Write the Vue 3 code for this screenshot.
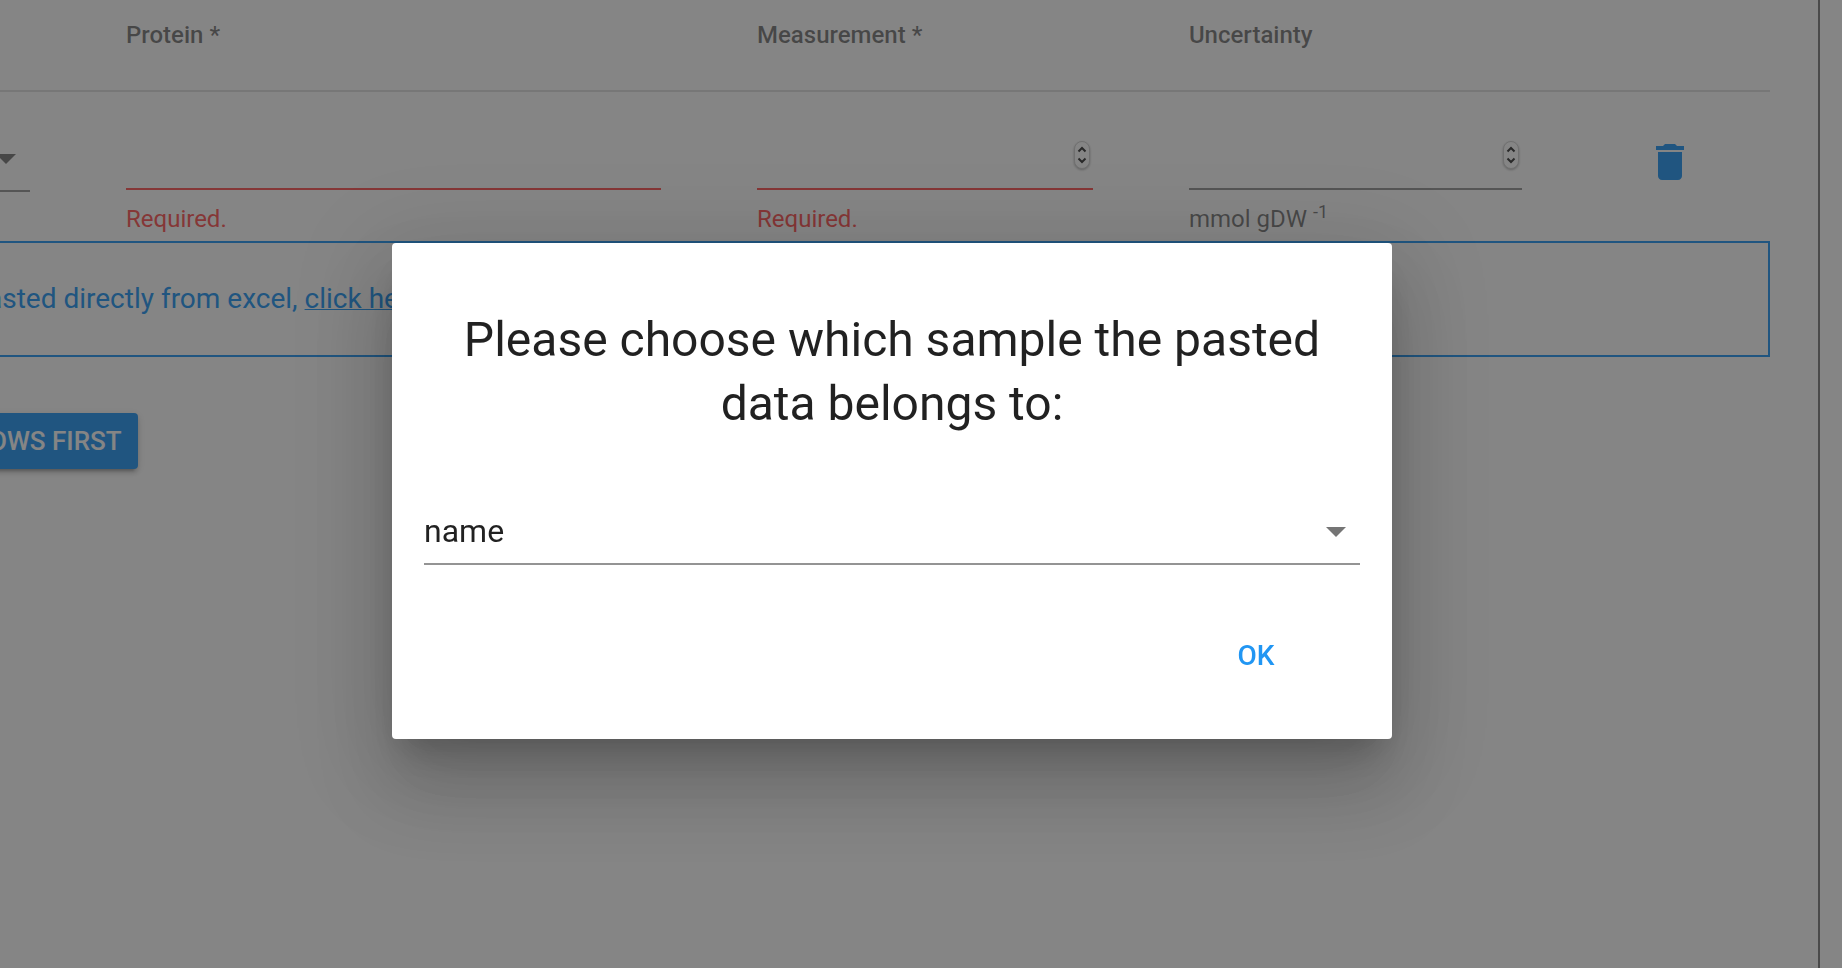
<script setup>
import { ref } from 'vue'

const columns = [
  { key: 'protein', title: 'Protein *', number: false, required: true },
  { key: 'measurement', title: 'Measurement *', number: true, required: true },
  { key: 'uncertainty', title: 'Uncertainty', number: true, required: false },
]
const row = ref({ protein: '', measurement: '', uncertainty: '' })
const sample = ref('name')
</script>

<template>
  <div class="page">
    <main class="panel">
      <table class="grid">
        <colgroup>
          <col class="c-select" />
          <col class="c-protein" />
          <col class="c-measurement" />
          <col class="c-uncertainty" />
          <col />
        </colgroup>
        <thead>
          <tr>
            <th></th>
            <th v-for="c in columns" :key="c.key" scope="col">{{ c.title }}</th>
            <th></th>
          </tr>
        </thead>
        <tbody>
          <tr>
            <td class="first">
              <div class="field select-field">
                <select class="control" aria-label="Sample"><option></option></select>
                <svg class="caret" viewBox="0 0 20 10" aria-hidden="true"><path d="M0 0h20L10 10z" /></svg>
              </div>
            </td>
            <td v-for="c in columns" :key="c.key">
              <div class="field" :class="{ error: c.required }">
                <input
                  v-model="row[c.key]"
                  class="control"
                  :type="c.number ? 'number' : 'text'"
                  :aria-label="c.title"
                />
                <svg v-if="c.number" class="stepper" viewBox="0 0 16 28" aria-hidden="true">
                  <rect x="0.5" y="0.5" width="15" height="27" rx="7.5" />
                  <path d="M4.5 10.5 8 7l3.500 3.500M4.500 17.500 8 21l3.500-3.500" />
                </svg>
              </div>
              <div v-if="c.required" class="hint error-text">Required.</div>
              <div v-else class="hint">mmol gDW <sup>-1</sup></div>
            </td>
            <td class="actions">
              <button class="delete" type="button" aria-label="Delete row">
                <svg viewBox="0 0 24 24" aria-hidden="true">
                  <path d="M6 19c0 1.100.9 2 2 2h8c1.100 0 2-.9 2-2V7H6v12zM19 4h-3.500l-1-1h-5l-1 1H5v2h14V4z" />
                </svg>
              </button>
            </td>
          </tr>
        </tbody>
      </table>
      <div class="notice">
        <p>asted directly from excel, <a href="#">click here</a></p>
      </div>
      <button class="add" type="button">OWS FIRST</button>
    </main>

    <div class="overlay">
      <form class="dialog" role="dialog" aria-modal="true" aria-labelledby="dialog-title" @submit.prevent>
        <h2 id="dialog-title">
          <label for="sample">Please choose which sample the pasted data belongs to:</label>
        </h2>
        <div class="pick">
          <select id="sample" v-model="sample">
            <option>name</option>
          </select>
          <svg class="caret" viewBox="0 0 20 10" aria-hidden="true"><path d="M0 0h20L10 10z" /></svg>
        </div>
        <button class="ok" type="submit">OK</button>
      </form>
    </div>
  </div>
</template>

<style>
body {
  margin: 0;
  background: #fff;
}
</style>

<style scoped>
.page,
.page * {
  box-sizing: border-box;
}
.page {
  min-height: 100vh;
  display: flex;
  padding-right: 22px;
  overflow: hidden;
  font-family: Roboto, "Liberation Sans", sans-serif;
}
button,
input,
select {
  font-family: inherit;
  border: 0;
  background: none;
  padding: 0;
  margin: 0;
  border-radius: 0;
  outline: 0;
}
.panel {
  flex: 1;
  min-width: 0;
  padding-right: 48px;
  border-right: 2px solid #7d7d7d;
}
.grid {
  width: 100%;
  table-layout: fixed;
  border-collapse: separate;
  border-spacing: 0;
}
.c-select {
  width: 78px;
}
.c-protein {
  width: 35.65%;
}
.c-measurement {
  width: 24.4%;
}
.c-uncertainty {
  width: 24.25%;
}
th {
  padding: 20px 48px 40px;
  border-bottom: 2px solid rgba(0, 0, 0, 0.12);
  font-size: 24px;
  line-height: 30px;
  font-weight: 500;
  text-align: left;
  white-space: nowrap;
  color: rgba(0, 0, 0, 0.54);
}
td {
  height: 149px;
  padding: 40px 48px 0;
  vertical-align: top;
}
td.first {
  padding-left: 0;
}
.field {
  position: relative;
  border-bottom: 2px solid rgba(0, 0, 0, 0.42);
}
.field.error {
  border-color: #ff5252;
}
.control {
  display: block;
  width: 100%;
  height: 56px;
  font-size: 32px;
  appearance: none;
  -moz-appearance: textfield;
}
.control::-webkit-inner-spin-button {
  display: none;
}
.select-field .control {
  height: 58px;
}
.caret {
  position: absolute;
  width: 20px;
  height: 10px;
  right: 14px;
  top: 28px;
  fill: rgba(0, 0, 0, 0.54);
  pointer-events: none;
}
.select-field .caret {
  top: 22px;
}
.stepper {
  position: absolute;
  right: 3px;
  top: 9px;
  width: 16px;
  height: 28px;
  filter: drop-shadow(0 1px 1px rgba(0, 0, 0, 0.3));
}
.stepper rect {
  fill: #fff;
  stroke: #d0d0d0;
}
.stepper path {
  fill: none;
  stroke: #333;
  stroke-width: 2;
}
.hint {
  margin-top: 16px;
  font-size: 24px;
  line-height: 26px;
  white-space: nowrap;
  color: rgba(0, 0, 0, 0.54);
}
.hint sup {
  font-size: 18px;
  line-height: 0;
}
.hint.error-text {
  color: #ff5252;
}
td.actions {
  padding: 46px 0 0;
  text-align: center;
}
.delete svg {
  display: block;
  width: 48px;
  height: 48px;
  fill: #2196f3;
}
.notice {
  border: 2px solid #2196f3;
  border-left: 0;
  height: 116px;
  display: flex;
  align-items: center;
}
.notice p {
  margin: 0 0 0 -13px;
  font-size: 28px;
  line-height: 42px;
  white-space: nowrap;
  color: #2196f3;
}
.notice a {
  color: inherit;
  text-decoration-thickness: 1px;
}
.add {
  display: block;
  height: 56px;
  margin: 56px 0 0 -11px;
  padding: 0 16px 0 0;
  border-radius: 4px;
  background: #2196f3;
  color: #fff;
  font-size: 26px;
  font-weight: 500;
  box-shadow: 0 6px 2px -4px rgba(0, 0, 0, 0.2), 0 4px 4px 0 rgba(0, 0, 0, 0.14), 0 2px 10px 0 rgba(0, 0, 0, 0.12);
}
.overlay {
  position: fixed;
  inset: 0;
  display: flex;
  align-items: center;
  justify-content: center;
  padding: 14px 58px 0 0;
  background: rgba(33, 33, 33, 0.55);
}
.dialog {
  display: flex;
  flex-direction: column;
  width: 100%;
  max-width: 1000px;
  padding: 65px 32px 48px;
  border-radius: 4px;
  background: #fff;
  box-shadow: 0 22px 30px -14px rgba(0, 0, 0, 0.2), 0 48px 76px 6px rgba(0, 0, 0, 0.14), 0 18px 92px 16px rgba(0, 0, 0, 0.12);
}
h2 {
  margin: 0 0 63px;
  padding: 0 32px;
  font-size: 48px;
  line-height: 64px;
  font-weight: 400;
  text-align: center;
  color: rgba(0, 0, 0, 0.87);
}
.pick {
  position: relative;
  border-bottom: 2px solid rgba(0, 0, 0, 0.42);
}
.pick select {
  display: block;
  width: 100%;
  height: 64px;
  appearance: none;
  font-size: 32px;
  color: rgba(0, 0, 0, 0.87);
}
.ok {
  align-self: flex-end;
  min-width: 128px;
  height: 72px;
  margin: 54px 40px 0 0;
  font-size: 28px;
  font-weight: 500;
  color: #2196f3;
}
</style>
